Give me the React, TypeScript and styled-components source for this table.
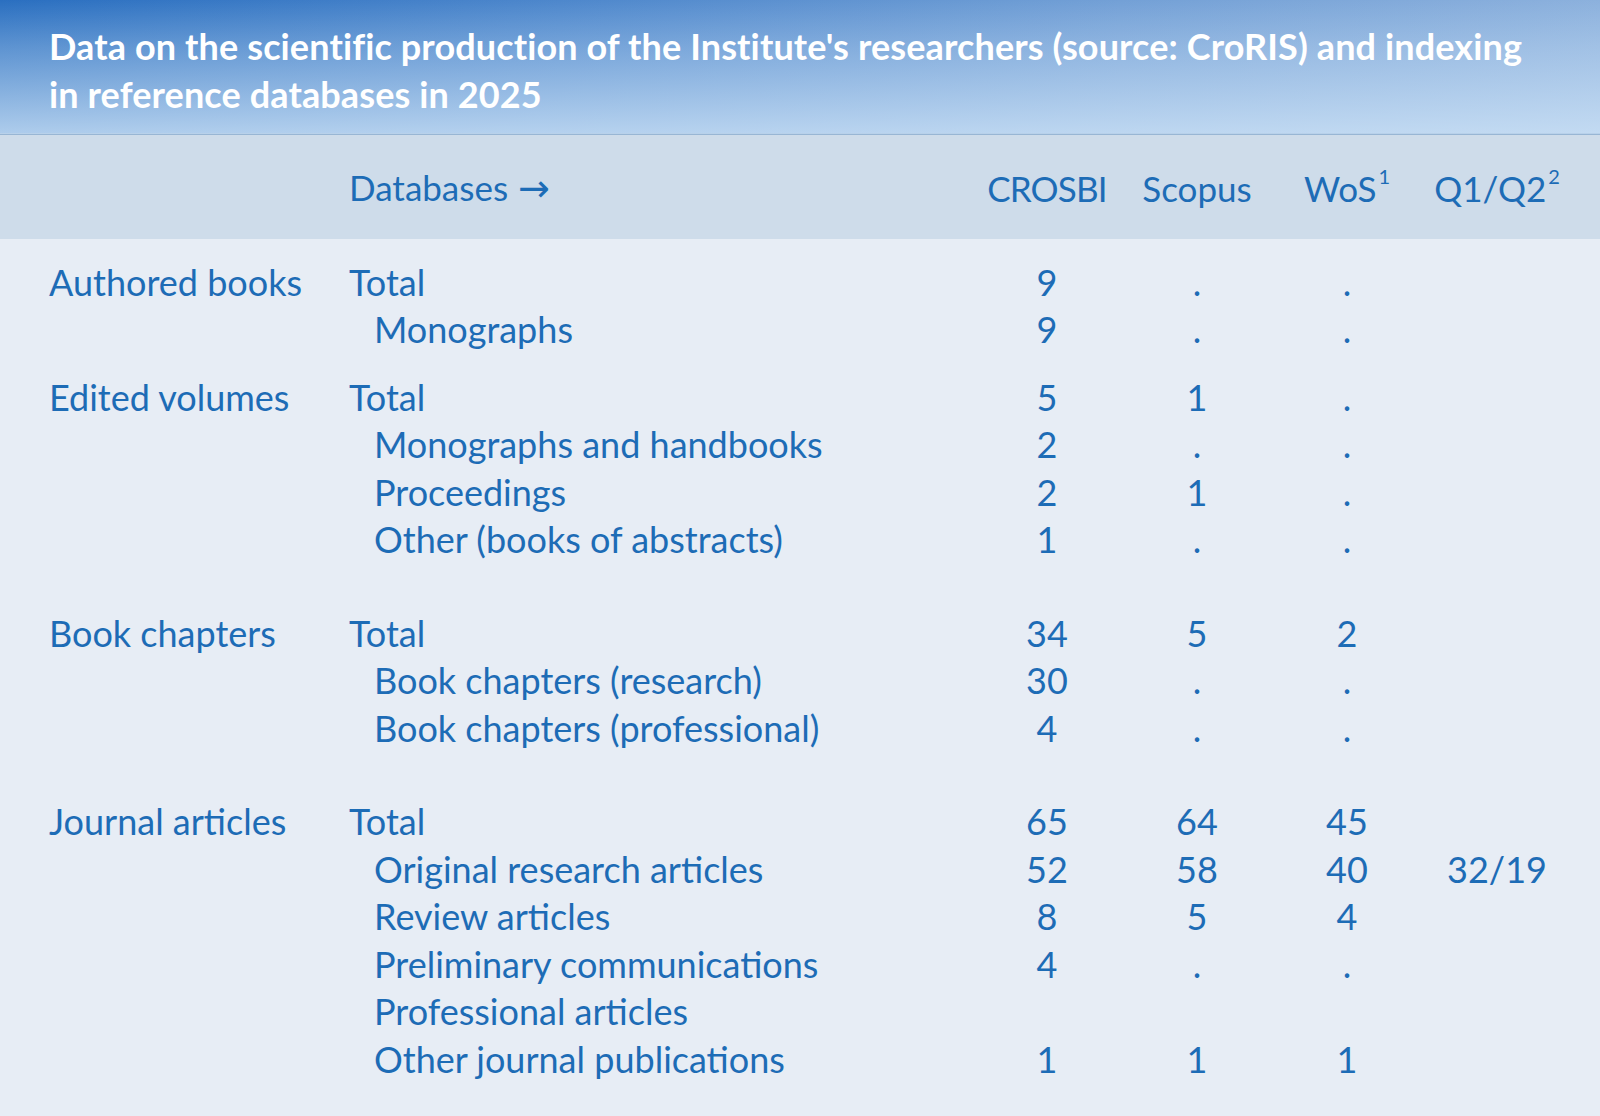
import React from "react";
import styled, { createGlobalStyle } from "styled-components";

const Global = createGlobalStyle`
  html, body { margin: 0; padding: 0; }
  body { background: #e7edf5; font-family: Lato, "Open Sans", sans-serif; }
`;

const Page = styled.div`
  width: 1600px;
  min-height: 1116px;
  background: #e7edf5;
  color: #1d6cb6;
`;

const TitleBar = styled.header`
  height: 134px;
  box-sizing: border-box;
  padding: 22px 30px 0 49px;
  border-bottom: 1px solid #b8d1ea;
  box-shadow: 0 1px 0 #98b6d4;
  margin-bottom: 1px;
  background:
    linear-gradient(180deg, rgba(210, 230, 248, 0) 0%, rgba(210, 230, 248, 0.3) 35%, rgba(210, 230, 248, 0.78) 100%),
    linear-gradient(90deg, #2a6fc0 0%, #4d87cc 35%, #73a0d6 70%, #8cb1dd 100%);
`;

const Title = styled.h1`
  margin: 0;
  font-family: Lato, "Open Sans", sans-serif;
  font-weight: 700;
  font-size: 36px;
  line-height: 48px;
  letter-spacing: 0.12px;
  color: #ffffff;
  white-space: nowrap;
`;

const Grid = styled.div`
  display: grid;
  grid-template-columns: 300px 623px 150px 150px 150px 150px;
  padding-left: 49px;
  align-items: center;
`;

const HeadBand = styled(Grid)`
  height: 104px;
  padding-top: 2px;
  box-sizing: border-box;
  background: #cedcea;
  font-size: 35px;
`;

const Body = styled.div`
  padding: 19px 0 30px;
`;

const Row = styled(Grid)<{ $gap?: number }>`
  height: 47.5px;
  font-size: 36px;
  margin-bottom: ${(p) => p.$gap ?? 0}px;
`;

const Cat = styled.div`
  white-space: nowrap;
`;

const Label = styled.div<{ $sub?: boolean }>`
  white-space: nowrap;
  padding-left: ${(p) => (p.$sub ? 25 : 0)}px;
`;

const Num = styled.div<{ $tight?: boolean }>`
  text-align: center;
  white-space: nowrap;
  letter-spacing: ${(p) => (p.$tight ? "-0.8px" : "0")};
`;

const Sup = styled.sup`
  font-size: 20px;
  vertical-align: 18px;
  line-height: 0;
  margin-left: 2px;
`;

const Arrow = styled.span`
  font-family: "DejaVu Sans", sans-serif;
  font-size: 38px;
  margin-left: 10px;
`;

type RowData = [string, string, string, string, string];
type Group = { cat: string; rows: RowData[]; gap: number };

const groups: Group[] = [
  {
    cat: "Authored books",
    gap: 20,
    rows: [
      ["Total", "9", ".", ".", ""],
      ["Monographs", "9", ".", ".", ""],
    ],
  },
  {
    cat: "Edited volumes",
    gap: 46,
    rows: [
      ["Total", "5", "1", ".", ""],
      ["Monographs and handbooks", "2", ".", ".", ""],
      ["Proceedings", "2", "1", ".", ""],
      ["Other (books of abstracts)", "1", ".", ".", ""],
    ],
  },
  {
    cat: "Book chapters",
    gap: 46,
    rows: [
      ["Total", "34", "5", "2", ""],
      ["Book chapters (research)", "30", ".", ".", ""],
      ["Book chapters (professional)", "4", ".", ".", ""],
    ],
  },
  {
    cat: "Journal articles",
    gap: 0,
    rows: [
      ["Total", "65", "64", "45", ""],
      ["Original research articles", "52", "58", "40", "32/19"],
      ["Review articles", "8", "5", "4", ""],
      ["Preliminary communications", "4", ".", ".", ""],
      ["Professional articles", "", "", "", ""],
      ["Other journal publications", "1", "1", "1", ""],
    ],
  },
];

export default function App() {
  return (
    <Page>
      <Global />
      <TitleBar>
        <Title>
          Data on the scientific production of the Institute's researchers (source: CroRIS) and indexing
          <br />
          in reference databases in 2025
        </Title>
      </TitleBar>
      <HeadBand>
        <Cat />
        <Label>
          Databases<Arrow>→</Arrow>
        </Label>
        <Num $tight>CROSBI</Num>
        <Num>Scopus</Num>
        <Num>
          WoS<Sup>1</Sup>
        </Num>
        <Num>
          Q1/Q2<Sup>2</Sup>
        </Num>
      </HeadBand>
      <Body>
        {groups.map((g) =>
          g.rows.map((r, i) => (
            <Row key={g.cat + i} $gap={i === g.rows.length - 1 ? g.gap : 0}>
              <Cat>{i === 0 ? g.cat : ""}</Cat>
              <Label $sub={i > 0}>{r[0]}</Label>
              <Num>{r[1]}</Num>
              <Num>{r[2]}</Num>
              <Num>{r[3]}</Num>
              <Num>{r[4]}</Num>
            </Row>
          ))
        )}
      </Body>
    </Page>
  );
}
